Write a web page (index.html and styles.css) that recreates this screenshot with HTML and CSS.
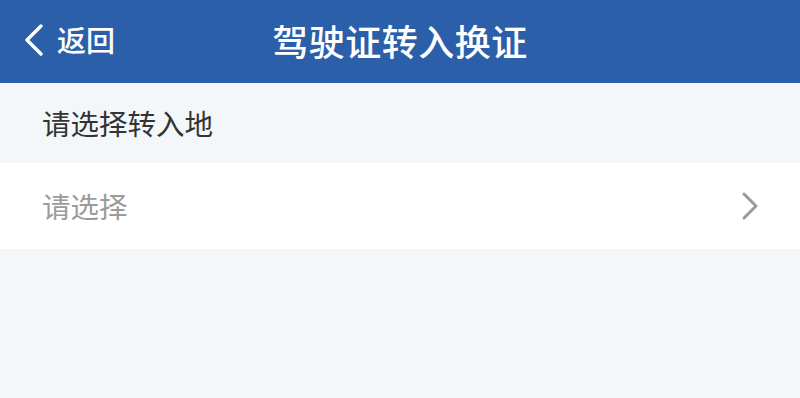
FILE: index.html
```html
<!DOCTYPE html>
<html lang="zh-CN">
<head>
<meta charset="utf-8">
<title>驾驶证转入换证</title>
<link rel="stylesheet" href="styles.css">
</head>
<body>
<div class="page">
  <header class="navbar">
    <div class="back">
      <svg class="back-icon" width="20" height="32" viewBox="0 0 20 32"><path d="M17 2 L3 16 L17 30" fill="none" stroke="#ffffff" stroke-width="3.4" stroke-linecap="round" stroke-linejoin="round"/></svg>
      <span class="back-text">返回</span>
    </div>
    <h1 class="title">驾驶证转入换证</h1>
  </header>
  <div class="section-label">请选择转入地</div>
  <div class="select-row">
    <span class="placeholder">请选择</span>
    <svg class="arrow" width="18" height="30" viewBox="0 0 18 30"><path d="M3 3 L15 15 L3 27" fill="none" stroke="#9a9a9a" stroke-width="3" stroke-linecap="round" stroke-linejoin="round"/></svg>
  </div>
</div>
</body>
</html>
```

FILE: styles.css
```css
html, body {
  margin: 0;
  padding: 0;
  background: #f4f7f9;
  font-family: "Noto Sans CJK SC", "Noto Sans", sans-serif;
}
.page {
  width: 800px;
  height: 398px;
  background: #f4f7f9;
}
.navbar {
  position: relative;
  height: 83px;
  background: #2b5fa9;
  display: flex;
  align-items: center;
  justify-content: center;
}
.back {
  position: absolute;
  left: 24px;
  top: 0;
  height: 79px;
  display: flex;
  align-items: center;
  gap: 13px;
}
.back-icon {
  display: block;
}
.back-text {
  color: #ffffff;
  font-size: 29px;
  font-weight: 500;
  line-height: 1;
}
.title {
  margin: 0;
  margin-bottom: 4px;
  color: #ffffff;
  font-size: 36px;
  font-weight: 500;
  line-height: 1;
  letter-spacing: 0.5px;
}
.section-label {
  height: 80px;
  display: flex;
  align-items: center;
  padding-left: 42px;
  font-size: 28.5px;
  color: #333333;
  line-height: 1;
}
.select-row {
  height: 86px;
  background: #ffffff;
  display: flex;
  align-items: center;
  justify-content: space-between;
  padding: 0 41px 0 42px;
}
.placeholder {
  font-size: 28.5px;
  color: #9b9b9b;
  line-height: 1;
}
.arrow {
  display: block;
}
```
